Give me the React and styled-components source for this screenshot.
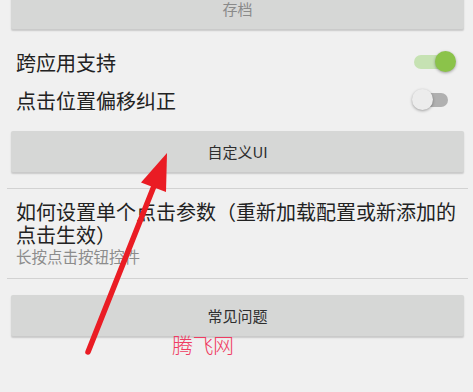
import React, { useState } from 'react'
import styled, { createGlobalStyle } from 'styled-components'

const GlobalStyle = createGlobalStyle`
    html, body {
        margin: 0;
        padding: 0;
        background: #f0f0f0;
        font-family: "Noto Sans CJK SC", "Noto Sans", Roboto, sans-serif;
        overflow: hidden;
    }
`

const Page = styled.div`
    position: relative;
    width: 473px;
    height: 392px;
    overflow: hidden;
    background: #f0f0f0;
`

const Button = styled.div`
    margin: ${(p) => p.$margin || '0'};
    margin-left: 11px;
    margin-right: 9px;
    height: 41px;
    display: flex;
    align-items: center;
    justify-content: center;
    background: #d6d7d6;
    border-radius: 2px;
    box-shadow: 0 1.5px 1.5px rgba(0, 0, 0, 0.16);
    font-size: 15px;
    color: ${(p) => (p.$muted ? '#8a8a8a' : '#2e2e2e')};
`

const Row = styled.div`
    height: 38px;
    display: flex;
    align-items: center;
    justify-content: space-between;
    padding: 0 17px 0 16px;
    font-size: 20px;
    color: #222;
`

const Switch = styled.div`
    position: relative;
    width: 45px;
    height: 24px;
    flex-shrink: 0;
`

const Track = styled.div`
    position: absolute;
    left: 3px;
    right: 8px;
    top: 5px;
    height: 14px;
    border-radius: 7px;
    background: ${(p) => (p.$on ? '#c6e2b3' : '#b0b0b0')};
`

const Thumb = styled.div`
    position: absolute;
    top: 1px;
    left: ${(p) => (p.$on ? '24px' : '1px')};
    width: 21px;
    height: 21px;
    border-radius: 50%;
    background: ${(p) => (p.$on ? '#8bc34a' : '#ececec')};
    box-shadow: 0 1px 3px rgba(0, 0, 0, 0.35);
`

const Divider = styled.div`
    height: 1px;
    margin: 0 5px 0 7px;
    background: #d2d2d2;
`

const Help = styled.div`
    padding: 11px 14px 11px 16px;
`

const HelpTitle = styled.div`
    font-size: 20px;
    line-height: 23px;
    color: #222;
`

const HelpSub = styled.div`
    font-size: 15.5px;
    line-height: 21px;
    color: #8c8c8c;
`

const Watermark = styled.div`
    position: absolute;
    left: 172px;
    top: 329px;
    font-size: 21px;
    font-weight: 300;
    color: #ef3c62;
    letter-spacing: -0.5px;
`

const Overlay = styled.svg`
    position: absolute;
    left: 0;
    top: 0;
    pointer-events: none;
`

function Toggle({ on }) {
    return (
        <Switch>
            <Track $on={on} />
            <Thumb $on={on} />
        </Switch>
    )
}

export default function App() {
    const [crossApp] = useState(true)
    const [offsetFix] = useState(false)

    return (
        <Page>
            <GlobalStyle />
            <Button $muted $margin="-12px 0 0">存档</Button>
            <Row style={{ marginTop: 14 }}>
                <span>跨应用支持</span>
                <Toggle on={crossApp} />
            </Row>
            <Row>
                <span>点击位置偏移纠正</span>
                <Toggle on={offsetFix} />
            </Row>
            <Button $margin="12px 0 16px">自定义UI</Button>
            <Divider />
            <Help>
                <HelpTitle>如何设置单个点击参数（重新加载配置或新添加的点击生效）</HelpTitle>
                <HelpSub>长按点击按钮控件</HelpSub>
            </Help>
            <Divider />
            <Button $margin="16px 0 0">常见问题</Button>

            {/* annotation drawn over the screenshot */}
            <Overlay width="473" height="392" viewBox="0 0 473 392">
                <line x1="88" y1="352" x2="154" y2="186" stroke="#ea1c24" strokeWidth="5.5" strokeLinecap="round" />
                <polygon points="167,153 141,182.5 166,192" fill="#ea1c24" />
            </Overlay>
            <Watermark>腾飞网</Watermark>
        </Page>
    )
}
